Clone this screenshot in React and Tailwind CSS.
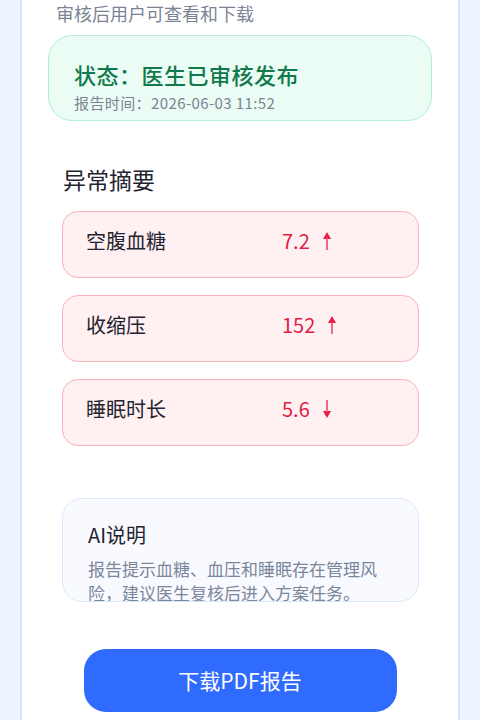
import { useState } from "react";

const abnormalItems = [
    { name: "空腹血糖", value: "7.2", trend: "up" },
    { name: "收缩压", value: "152", trend: "up" },
    { name: "睡眠时长", value: "5.6", trend: "down" },
];

function TrendArrow({ trend }) {
    // thin arrow with a filled head, flipped for "down"
    return (
        <svg
            width="10"
            height="20"
            viewBox="0 0 10 20"
            className={trend === "down" ? "rotate-180" : ""}
        >
            <path d="M5 1 L9 8 L1 8 Z" fill="#e11d48" />
            <rect x="4.1" y="7" width="1.8" height="12" fill="#ec5b7b" />
        </svg>
    );
}

function AbnormalRow({ item }) {
    return (
        <div className="h-[67px] rounded-[16px] border border-[#fcb3bc] bg-[#fff0f1] pl-[23px] pt-[15px]">
            <div className="flex items-center leading-[28px]">
                <span className="w-[196px] text-[20px] font-normal text-[#1f2430]">
                    {item.name}
                </span>
                <span className="text-[20px] text-[#e11d48]">{item.value}</span>
                <span className="ml-[12px] flex items-center">
                    <TrendArrow trend={item.trend} />
                </span>
            </div>
        </div>
    );
}

export default function App() {
    const [downloading, setDownloading] = useState(false);

    return (
        <div
            className="min-h-screen bg-[#edf3ff] px-5"
            style={{ fontFamily: '"Noto Sans CJK SC", "Noto Sans", sans-serif' }}
        >
            <div className="h-[720px] overflow-hidden border-x-2 border-[#d8e5fd] bg-white">
                {/* Review status */}
                <div className="px-[26px]">
                    <p className="pl-[8px] text-[18px] leading-[26px] text-[#7b8494]">
                        审核后用户可查看和下载
                    </p>
                    <div className="mt-[9px] h-[86px] rounded-[24px] border border-[#b3efd2] bg-[#ebfcf4] pl-[25px] pt-[23px]">
                        <p className="text-[22px] font-medium leading-[30px] tracking-[0.5px] text-[#107a4d]">
                            状态：医生已审核发布
                        </p>
                        <p className="mt-[3px] text-[15px] leading-[22px] tracking-[0.4px] text-[#7b8494]">
                            报告时间：2026-06-03 11:52
                        </p>
                    </div>
                </div>

                {/* Abnormal summary */}
                <div className="mt-[42px] pl-[40px] pr-[39px]">
                    <h2 className="pl-px text-[23px] font-normal leading-[32px] text-[#1f2430]">
                        异常摘要
                    </h2>
                    <div className="mt-[16px] flex flex-col gap-[17px]">
                        {abnormalItems.map((item) => (
                            <AbnormalRow key={item.name} item={item} />
                        ))}
                    </div>

                    {/* AI note */}
                    <div className="mt-[52px] h-[104px] overflow-hidden rounded-[20px] border border-[#dce6fb] bg-[#f8faff] px-[25px] pt-[22px]">
                        <h3 className="text-[20px] font-normal leading-[28px] text-[#1f2430]">
                            AI说明
                        </h3>
                        <p className="mt-[8px] text-[17px] leading-[24px] text-[#7a869a]">
                            报告提示血糖、血压和睡眠存在管理风险，建议医生复核后进入方案任务。
                        </p>
                    </div>
                </div>

                {/* Download */}
                <div className="mt-[47px] flex justify-center">
                    <button
                        onClick={() => setDownloading(true)}
                        className="h-[63px] w-[313px] rounded-[22px] bg-[#2f6bff] text-[21px] text-white"
                    >
                        {downloading ? "下载PDF报告" : "下载PDF报告"}
                    </button>
                </div>
            </div>
        </div>
    );
}
